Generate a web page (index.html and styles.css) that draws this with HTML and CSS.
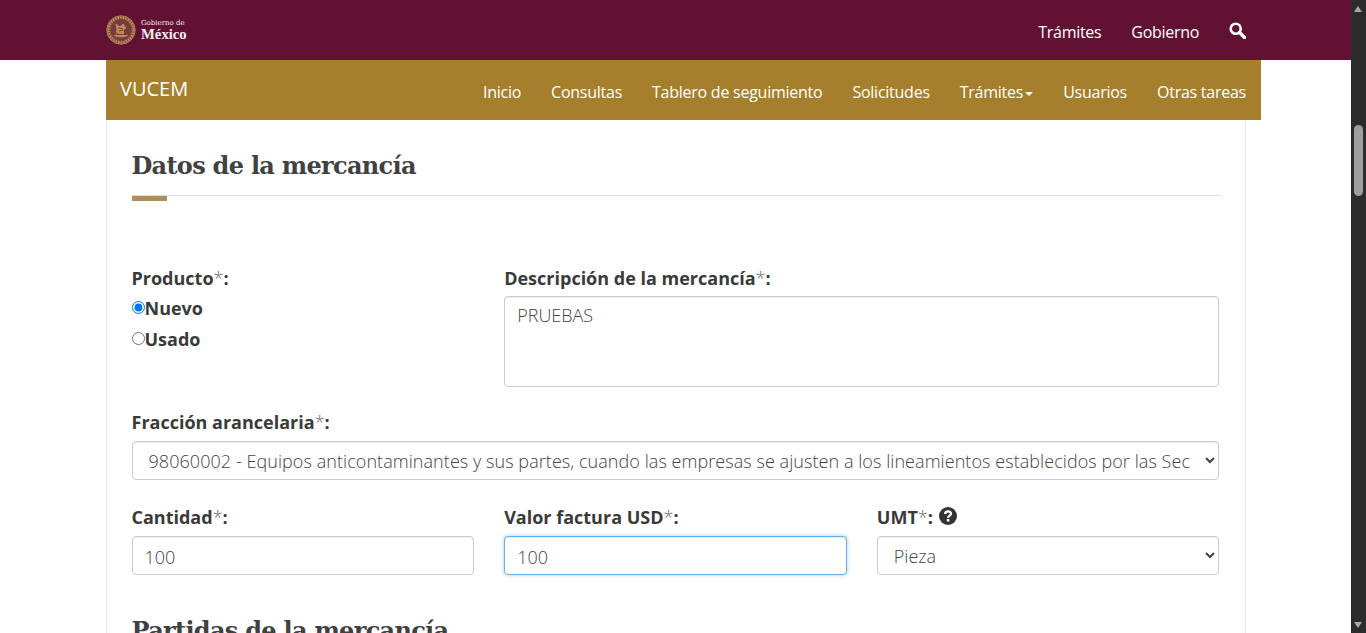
FILE: index.html
```html
<!DOCTYPE html>
<html lang="es">
<head>
    <meta charset="UTF-8">
    <meta name="viewport" content="width=device-width, initial-scale=1.0">
    <title>VUCEM - Datos de la mercancía</title>
    <link rel="stylesheet" href="styles.css">
</head>
<body>

<div class="window">
    <div class="page">
        <header class="gob-bar">
            <a class="gob-logo" href="#">
                <svg class="emblem" width="30" height="30" viewBox="0 0 30 30">
                    <circle cx="15" cy="15" r="14.500" fill="#86503f"/>
                    <circle cx="15" cy="15" r="14.200" fill="none" stroke="#b98c5c" stroke-width="0.800"/>
                    <circle cx="15" cy="15" r="12.400" fill="none" stroke="#c0925f" stroke-width="2" stroke-dasharray="1.500 1.100"/>
                    <circle cx="15" cy="15" r="10.400" fill="#7a3a3a"/>
                    <path d="M8 20c3 2.500 11 2.500 14 0M10 9l4 3 3-3 3 4-3 2 1 4-5-1-3 1 1-5z" fill="#b98c5c" stroke="#b98c5c" stroke-width="1"/>
                    <path d="M12 13l5 1M13 16l4-1M9 17l3 2M21 17l-3 2" stroke="#7a3a3a" stroke-width="1"/>
                </svg>
                <span class="gob-words">
                    <span class="gob-small">Gobierno de</span>
                    <span class="gob-big">México</span>
                </span>
            </a>
            <nav class="gob-nav">
                <a href="#">Trámites</a>
                <a href="#">Gobierno</a>
                <a href="#" class="search-link" aria-label="Buscar">
                    <svg width="17" height="17" viewBox="0 0 17 17" fill="none" stroke="#fff">
                        <circle cx="6.700" cy="6.700" r="5" stroke-width="2.600"/>
                        <path d="M10.500 10.500l5 5" stroke-width="3.200" stroke-linecap="round"/>
                    </svg>
                </a>
            </nav>
        </header>

        <nav class="sub-bar">
            <a class="brand" href="#">VUCEM</a>
            <div class="sub-links">
                <a href="#">Inicio</a>
                <a href="#">Consultas</a>
                <a href="#">Tablero de seguimiento</a>
                <a href="#">Solicitudes</a>
                <a href="#">Trámites<span class="caret"></span></a>
                <a href="#">Usuarios</a>
                <a href="#">Otras tareas</a>
            </div>
        </nav>

        <main class="card">
            <h2 class="section-title">Datos de la mercancía</h2>
            <div class="section-rule"></div>

            <form class="form-grid">
                <div class="field">
                    <label class="field-label">Producto<span class="req">*</span>:</label>
                    <label class="radio first-radio"><input type="radio" name="producto" checked>Nuevo</label>
                    <label class="radio"><input type="radio" name="producto">Usado</label>
                </div>
                <div class="field span-2">
                    <label class="field-label" for="descripcion">Descripción de la mercancía<span class="req">*</span>:</label>
                    <textarea id="descripcion" class="control area">PRUEBAS</textarea>
                </div>

                <div class="field span-3">
                    <label class="field-label" for="fraccion">Fracción arancelaria<span class="req">*</span>:</label>
                    <select id="fraccion" class="control long-select">
                        <option>98060002 - Equipos anticontaminantes y sus partes, cuando las empresas se ajusten a los lineamientos establecidos por las Secretarías de Economía y de Medio Ambiente</option>
                    </select>
                </div>

                <div class="field">
                    <label class="field-label" for="cantidad">Cantidad<span class="req">*</span>:</label>
                    <input id="cantidad" class="control" type="text" value="100">
                </div>
                <div class="field">
                    <label class="field-label" for="valor">Valor factura USD<span class="req">*</span>:</label>
                    <input id="valor" class="control focused" type="text" value="100">
                </div>
                <div class="field">
                    <label class="field-label" for="umt">UMT<span class="req">*</span>:
                        <svg class="help" width="18" height="18" viewBox="0 0 17 17">
                            <circle cx="8.500" cy="8.500" r="8.500" fill="#333"/>
                            <path d="M5.800 6.600c.2-3.100 5.500-3.200 5.500-.2 0 1.900-2.700 1.800-2.700 3.700" fill="none" stroke="#fff" stroke-width="2.200"/>
                            <rect x="7.400" y="11.300" width="2.400" height="2.400" fill="#fff"/>
                        </svg>
                    </label>
                    <select id="umt" class="control">
                        <option>Pieza</option>
                    </select>
                </div>
            </form>

            <h2 class="section-title next-title">Partidas de la mercancía</h2>
        </main>
    </div>

    <div class="scrollbar">
        <span class="arrow-up"></span>
        <span class="thumb"></span>
        <span class="arrow-down"></span>
    </div>
</div>

</body>
</html>
```

FILE: styles.css
```css
html, body {
    margin: 0;
    height: 100%;
    overflow: hidden;
}

body {
    font-family: "Open Sans", sans-serif;
    font-size: 16px;
    color: #333;
    background-color: #fff;
}

a {
    color: #fff;
    text-decoration: none;
}

.window {
    display: flex;
    height: 633px;
    overflow: hidden;
}

.page {
    flex: 1;
    min-width: 0;
}

.gob-bar {
    height: 60px;
    padding: 0 105px 0 106px;
    display: flex;
    align-items: center;
    justify-content: space-between;
    background-color: #611232;
}

.gob-logo {
    display: flex;
    align-items: center;
    gap: 5px;
}

.emblem {
    display: block;
}

.gob-words {
    display: flex;
    flex-direction: column;
    padding-bottom: 1px;
    color: #f4eeee;
}

.gob-small {
    font-family: "DejaVu Serif", serif;
    font-size: 7px;
    line-height: 9px;
}

.gob-big {
    font-family: "Liberation Serif", serif;
    font-size: 14.700px;
    line-height: 13px;
    font-weight: bold;
}

.gob-nav {
    display: flex;
    align-items: center;
    gap: 30px;
    padding-top: 4px;
    letter-spacing: -0.300px;
}

.search-link {
    display: flex;
    margin-bottom: 3px;
}

.sub-bar {
    height: 60px;
    margin: 0 90px 0 106px;
    padding: 0 15px 0 14px;
    display: flex;
    justify-content: space-between;
    background-color: #a57f2c;
}

.brand {
    font-size: 20px;
    line-height: 57px;
}

.sub-links {
    display: flex;
    gap: 30px;
    line-height: 65px;
    letter-spacing: -0.250px;
}

.caret {
    display: inline-block;
    margin-left: 2px;
    vertical-align: middle;
    border-top: 4px solid #fff;
    border-left: 4px solid transparent;
    border-right: 4px solid transparent;
}

.card {
    width: 1088px;
    margin-left: 106px;
    padding: 0 25.500px 0 24.500px;
    border-left: 1px solid #eee;
    border-right: 1px solid #eee;
    height: 513px;
}

.section-title {
    margin: 0;
    padding-top: 27px;
    font-family: "DejaVu Serif", serif;
    font-size: 24px;
    line-height: 38px;
    letter-spacing: -0.700px;
    font-weight: bold;
    color: #414141;
}

.section-rule {
    position: relative;
    margin-top: 10px;
    height: 1px;
    background-color: #e0e0e0;
}

.section-rule::after {
    content: "";
    position: absolute;
    left: 0;
    top: 1px;
    width: 35px;
    height: 5px;
    background-color: #b38e5d;
}

.form-grid {
    display: grid;
    grid-template-columns: repeat(3, 1fr);
    column-gap: 30px;
    row-gap: 24px;
    padding-top: 71px;
}

.span-2 {
    grid-column: span 2;
}

.span-3 {
    grid-column: span 3;
    margin-bottom: 2px;
}

.field-label {
    display: block;
    margin-bottom: 8px;
    font-size: 18px;
    font-weight: bold;
    line-height: 22px;
    color: #3a3a3a;
}

.req {
    font-weight: 300;
    color: #666;
}

.help {
    margin-left: 1px;
    vertical-align: -1px;
}

.radio {
    display: flex;
    align-items: center;
    height: 31px;
    font-size: 18px;
    font-weight: bold;
    color: #3a3a3a;
}

.first-radio {
    margin-top: -5px;
}

.radio input {
    margin: 0;
    width: 13px;
    height: 13px;
}

.control {
    display: block;
    box-sizing: border-box;
    width: 100%;
    height: 39px;
    padding: 7px 12px 5px;
    font-family: "Open Sans", sans-serif;
    font-size: 18px;
    font-weight: 300;
    color: #444;
    background-color: #fff;
    border: 1px solid #ccc;
    border-radius: 4px;
    box-shadow: inset 0 1px 1px rgba(0, 0, 0, 0.075);
    outline: none;
}

.area {
    height: 91px;
    margin-top: -1px;
    padding-top: 6px;
    resize: none;
}

select.control {
    padding: 6px 12px;
}

.long-select {
    letter-spacing: 0.060px;
}

.focused {
    border-color: #66afe9;
    box-shadow: inset 0 1px 1px rgba(0, 0, 0, 0.075), 0 0 4px rgba(102, 175, 233, 0.6);
}

.next-title {
    padding-top: 37px;
}

.scrollbar {
    position: relative;
    width: 15px;
    background-color: #2c2c2c;
}

.thumb {
    position: absolute;
    left: 3px;
    top: 125px;
    width: 9px;
    height: 71px;
    border-radius: 5px;
    background-color: #9f9f9f;
}

.arrow-up,
.arrow-down {
    position: absolute;
    left: 3px;
    border-left: 4.500px solid transparent;
    border-right: 4.500px solid transparent;
}

.arrow-up {
    top: 6px;
    border-bottom: 6px solid #a8a8a8;
}

.arrow-down {
    bottom: 5px;
    border-top: 6px solid #a8a8a8;
}
```
